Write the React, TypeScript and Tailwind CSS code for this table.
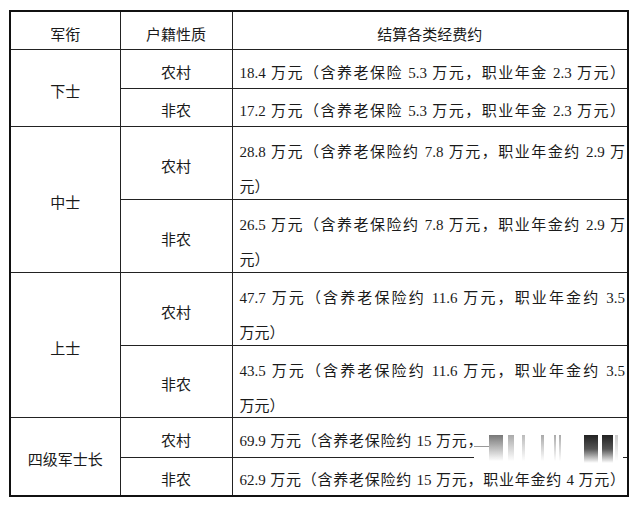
import React from "react";

type Item = { type: string; lines: string[]; height: number; blurred?: boolean };
type Group = { rank: string; items: Item[] };

const GROUPS: Group[] = [
  {
    rank: "下士",
    items: [
      { type: "农村", lines: ["18.4 万元（含养老保险 5.3 万元，职业年金 2.3 万元）"], height: 39 },
      { type: "非农", lines: ["17.2 万元（含养老保险 5.3 万元，职业年金 2.3 万元）"], height: 38 },
    ],
  },
  {
    rank: "中士",
    items: [
      { type: "农村", lines: ["28.8 万元（含养老保险约 7.8 万元，职业年金约 2.9 万", "元）"], height: 73 },
      { type: "非农", lines: ["26.5 万元（含养老保险约 7.8 万元，职业年金约 2.9 万", "元）"], height: 73 },
    ],
  },
  {
    rank: "上士",
    items: [
      { type: "农村", lines: ["47.7 万元（含养老保险约 11.6 万元，职业年金约 3.5", "万元）"], height: 73 },
      { type: "非农", lines: ["43.5 万元（含养老保险约 11.6 万元，职业年金约 3.5", "万元）"], height: 72 },
    ],
  },
  {
    rank: "四级军士长",
    items: [
      {
        type: "农村",
        lines: ["69.9 万元（含养老保险约 15 万元，职业年金约 4 万元）"],
        height: 40,
        blurred: true,
      },
      { type: "非农", lines: ["62.9 万元（含养老保险约 15 万元，职业年金约 4 万元）"], height: 39 },
    ],
  },
];

// smeared watermark strip lying over the 四级军士长 / 农村 row
const Smear = () => (
  <div className="absolute left-[241px] top-[15px] w-[149px] h-[25px] bg-white">
    <div className="flex items-start pt-[2px] blur-[0.6px]">
      <div className="mt-[11px] w-[15px] h-px bg-[#999]" />
      <div className="w-[14px] h-[26px] bg-linear-to-b from-[#777] to-transparent" />
      <div className="ml-[5px] w-[6px] h-[26px] bg-linear-to-b from-[#aaa] to-transparent" />
      <div className="ml-[8px] w-[3px] h-[26px] bg-linear-to-b from-[#bbb] to-transparent" />
      <div className="ml-[16px] w-[3px] h-[26px] bg-linear-to-b from-[#aaa] to-transparent" />
      <div className="ml-[10px] w-[2px] h-[26px] bg-linear-to-b from-[#aaa] to-transparent" />
      <div className="ml-[3px] w-[2px] h-[26px] bg-linear-to-b from-[#aaa] to-transparent" />
      <div className="ml-[23px] w-[14px] h-[28px] bg-linear-to-b from-[#222] via-[#555] to-transparent" />
      <div className="ml-[4px] w-[11px] h-[28px] bg-linear-to-b from-[#222] via-[#555] to-transparent" />
      <div className="ml-[2px] w-[3px] h-[26px] bg-linear-to-b from-[#ccc] to-transparent" />
    </div>
  </div>
);

const cell = "border border-[#222] p-0";

export default function App() {
  return (
    <div className="w-[640px] h-[508px] bg-white pt-[10px] pl-[9px] text-[15px] text-[#1a1a1a] font-['Liberation_Serif','Noto_Sans_CJK_SC',serif]">
      <table className="w-[620px] table-fixed border-collapse border-2 border-[#111]">
        <colgroup>
          <col className="w-[110px]" />
          <col className="w-[112px]" />
          <col />
        </colgroup>
        <tbody>
          <tr className="h-[38px]">
            <td className={`${cell} text-center align-middle pt-[10px] leading-[22px]`}>军衔</td>
            <td className={`${cell} text-center align-middle pt-[10px] leading-[22px]`}>户籍性质</td>
            <td className={`${cell} text-center align-middle pt-[10px] leading-[22px]`}>结算各类经费约</td>
          </tr>
          {GROUPS.map((group) =>
            group.items.map((item, index) => {
              const twoLines = item.lines.length > 1;
              return (
                <tr key={group.rank + item.type} style={{ height: item.height }}>
                  {index === 0 && (
                    <td
                      rowSpan={group.items.length}
                      className={`${cell} text-center align-middle pt-[8px] leading-[22px]`}
                    >
                      {group.rank}
                    </td>
                  )}
                  <td className={`${cell} text-center align-middle pt-[8px] leading-[22px]`}>
                    {item.type}
                  </td>
                  {twoLines ? (
                    <td className={`${cell} align-top pt-[8px] pl-[7px] pr-[2px]`}>
                      <div className="leading-[34px] text-justify [text-align-last:justify]">
                        {item.lines[0]}
                      </div>
                      <div className="h-[26px] leading-[36px]">{item.lines[1]}</div>
                    </td>
                  ) : (
                    <td className={`${cell} relative align-middle pt-[8px] pl-[7px] pr-[2px] leading-[22px]`}>
                      <div className="text-justify [text-align-last:justify]">{item.lines[0]}</div>
                      {item.blurred && <Smear />}
                    </td>
                  )}
                </tr>
              );
            }),
          )}
        </tbody>
      </table>
    </div>
  );
}
